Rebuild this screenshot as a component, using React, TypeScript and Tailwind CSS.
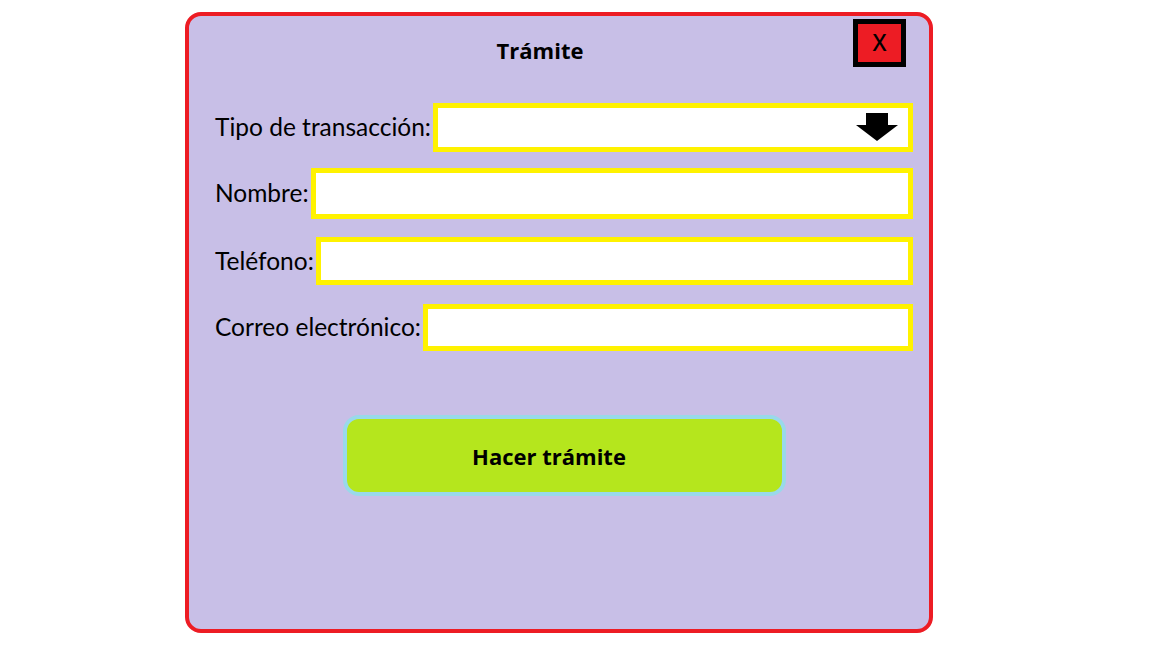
import React from "react";

function Field({ label, children, mt, h }: { label: string; children?: React.ReactNode; mt: string; h: string }) {
  return (
    <div className={`flex items-center ${mt}`}>
      <span className="text-[24.5px] text-black whitespace-nowrap pr-[2px]" style={{ fontFamily: "Lato, 'Open Sans', sans-serif" }}>
        {label}
      </span>
      <div className={`relative flex-1 ${h} border-[5px] border-[#fff200] bg-white`}>{children}</div>
    </div>
  );
}

export default function App() {
  return (
    <div className="w-[1152px] h-[648px] bg-white relative overflow-hidden">
      <div className="absolute left-[185px] top-[12px] w-[748px] h-[621px] rounded-[16px] border-[4px] border-[#ed1c24] bg-[#c8bfe7] flex flex-col pl-[26px] pr-[16px]">
        <div className="relative h-[87px] flex items-center justify-center pr-[48px]">
          <span className="text-[22px] font-bold text-black mt-[-18px]" style={{ fontFamily: "'Open Sans', sans-serif" }}>
            Trámite
          </span>
          <div className="absolute right-[7px] top-[3px] w-[53px] h-[48px] border-[5px] border-black bg-[#ed1c24] flex items-center justify-center">
            <span className="text-[23px] font-medium text-black leading-none mt-[-2px]" style={{ fontFamily: "'Noto Sans', sans-serif" }}>X</span>
          </div>
        </div>
        <div className="flex flex-col">
          <Field label="Tipo de transacción:" mt="mt-[0px]" h="h-[49px]">
            <svg className="absolute right-[10px] top-[5px]" width="42" height="28" viewBox="0 0 42 28">
              <path d="M10 0 H32 V12 H42 L21 28 L0 12 H10 Z" fill="black" />
            </svg>
          </Field>
          <Field label="Nombre:" mt="mt-[16px]" h="h-[51px]" />
          <Field label="Teléfono:" mt="mt-[18px]" h="h-[48px]" />
          <Field label="Correo electrónico:" mt="mt-[19px]" h="h-[47px]" />
        </div>
        <div className="flex justify-center mt-[64px]">
          <div className="w-[443px] h-[81px] rounded-[16px] border-[4px] border-[#99d9ea] bg-[#b5e61d] flex items-center justify-center pr-[30px]">
            <span className="text-[22px] font-bold text-black mt-[2px]" style={{ fontFamily: "'Open Sans', sans-serif" }}>
              Hacer trámite
            </span>
          </div>
        </div>
      </div>
    </div>
  );
}
